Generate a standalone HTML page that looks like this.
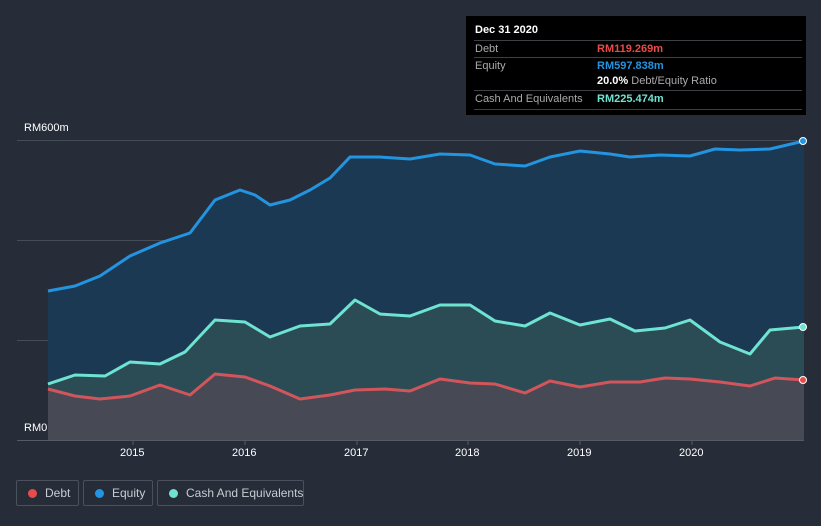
<!DOCTYPE html>
<html><head><style>
body{margin:0;width:821px;height:526px;background:#262c38;font-family:"Liberation Sans",sans-serif;overflow:hidden;position:relative}
.t{position:absolute;font-size:11px;color:#fff}
.tip{position:absolute;left:466px;top:16px;width:340px;height:99px;background:#000;color:#fff;font-size:11px}
.row{position:absolute;left:8px;width:328px;border-top:1px solid #3c3f44;height:17px}
.row span{position:absolute;top:2px;white-space:nowrap}
.leg{position:absolute;top:480px;height:26px;border:1px solid #4a505c;border-radius:2px;color:#c8ccd2;font-size:12px;line-height:24px;box-sizing:border-box;white-space:nowrap}
.leg i{position:absolute;left:11px;top:8px;width:9px;height:9px;border-radius:50%}
</style></head><body>
<svg width="821" height="526" style="position:absolute;left:0;top:0">
<g stroke="#474d58" stroke-width="1">
<line x1="17" y1="140.5" x2="804" y2="140.5"/><line x1="17" y1="240.5" x2="804" y2="240.5"/><line x1="17" y1="340.5" x2="804" y2="340.5"/><line x1="17" y1="440.5" x2="804" y2="440.5" stroke="#555b66"/>
</g>
<path d="M48,291 L75,286 L100,276 L130,256 L160,243 L190,233 L215,200 L240,190 L255,195 L270,205 L290,200 L310,190 L330,178 L350,157 L380,157 L410,159 L440,154 L470,155 L495,164 L525,166 L550,157 L580,151 L610,154 L630,157 L660,155 L690,156 L715,149 L740,150 L770,149 L804,141 L804,440 L48,440Z" fill="#1c3953"/>
<path d="M48,384 L75,375 L105,376 L130,362 L160,364 L185,352 L215,320 L245,322 L270,337 L300,326 L330,324 L355,300 L380,314 L410,316 L440,305 L470,305 L495,321 L525,326 L550,313 L580,325 L610,319 L635,331 L665,328 L690,320 L720,342 L750,354 L770,330 L804,327 L804,440 L48,440Z" fill="#2b4c54"/>
<path d="M48,389 L75,396 L100,399 L130,396 L160,385 L190,395 L215,374 L245,377 L270,386 L300,399 L330,395 L355,390 L385,389 L410,391 L440,379 L470,383 L495,384 L525,393 L550,381 L580,387 L610,382 L640,382 L665,378 L690,379 L720,382 L750,386 L775,378 L804,380 L804,440 L48,440Z" fill="#474a55"/>
<g fill="none" stroke-width="3" stroke-linejoin="round">
<path d="M48,291 L75,286 L100,276 L130,256 L160,243 L190,233 L215,200 L240,190 L255,195 L270,205 L290,200 L310,190 L330,178 L350,157 L380,157 L410,159 L440,154 L470,155 L495,164 L525,166 L550,157 L580,151 L610,154 L630,157 L660,155 L690,156 L715,149 L740,150 L770,149 L804,141" stroke="#2394df"/>
<path d="M48,384 L75,375 L105,376 L130,362 L160,364 L185,352 L215,320 L245,322 L270,337 L300,326 L330,324 L355,300 L380,314 L410,316 L440,305 L470,305 L495,321 L525,326 L550,313 L580,325 L610,319 L635,331 L665,328 L690,320 L720,342 L750,354 L770,330 L804,327" stroke="#6fe3d2"/>
<path d="M48,389 L75,396 L100,399 L130,396 L160,385 L190,395 L215,374 L245,377 L270,386 L300,399 L330,395 L355,390 L385,389 L410,391 L440,379 L470,383 L495,384 L525,393 L550,381 L580,387 L610,382 L640,382 L665,378 L690,379 L720,382 L750,386 L775,378 L804,380" stroke="#d2555c"/>
</g>
<circle cx="803" cy="141" r="3.5" fill="#2394df" stroke="#fff" stroke-width="1"/>
<circle cx="803" cy="327" r="3.5" fill="#6fe3d2" stroke="#fff" stroke-width="1"/>
<circle cx="803" cy="380" r="3.5" fill="#e84b4b" stroke="#fff" stroke-width="1"/>
<g stroke="#555b66"><line x1="133" y1="440" x2="133" y2="445"/><line x1="245" y1="440" x2="245" y2="445"/><line x1="357" y1="440" x2="357" y2="445"/><line x1="468" y1="440" x2="468" y2="445"/><line x1="580" y1="440" x2="580" y2="445"/><line x1="692" y1="440" x2="692" y2="445"/></g>
</svg>
<div class="t" style="left:24px;top:122px">RM600m</div>
<div class="t" style="left:24px;top:422px">RM0</div>
<div class="t" style="left:120px;top:447px">2015</div>
<div class="t" style="left:232px;top:447px">2016</div>
<div class="t" style="left:344px;top:447px">2017</div>
<div class="t" style="left:455px;top:447px">2018</div>
<div class="t" style="left:567px;top:447px">2019</div>
<div class="t" style="left:679px;top:447px">2020</div>
<div class="tip">
<div style="position:absolute;left:9px;top:8px;font-weight:bold">Dec 31 2020</div>
<div class="row" style="top:24px"><span style="color:#aaa;left:1px">Debt</span><span style="left:123px;color:#e84b4b;font-weight:bold">RM119.269m</span></div>
<div class="row" style="top:41px"><span style="color:#aaa;left:1px">Equity</span><span style="left:123px;color:#2394df;font-weight:bold">RM597.838m</span></div>
<div style="position:absolute;left:131px;top:59px"><b>20.0%</b> <span style="color:#aaa">Debt/Equity Ratio</span></div>
<div class="row" style="top:74px;height:18px;border-bottom:1px solid #3c3f44"><span style="color:#aaa;left:1px">Cash And Equivalents</span><span style="left:123px;color:#6fe3d2;font-weight:bold">RM225.474m</span></div>
</div>
<div class="leg" style="left:16px;width:63px"><i style="background:#e84b4b"></i><span style="position:absolute;left:28px">Debt</span></div>
<div class="leg" style="left:83px;width:70px"><i style="background:#2394df"></i><span style="position:absolute;left:28px">Equity</span></div>
<div class="leg" style="left:157px;width:147px"><i style="background:#6fe3d2"></i><span style="position:absolute;left:28px">Cash And Equivalents</span></div>
</body></html>
